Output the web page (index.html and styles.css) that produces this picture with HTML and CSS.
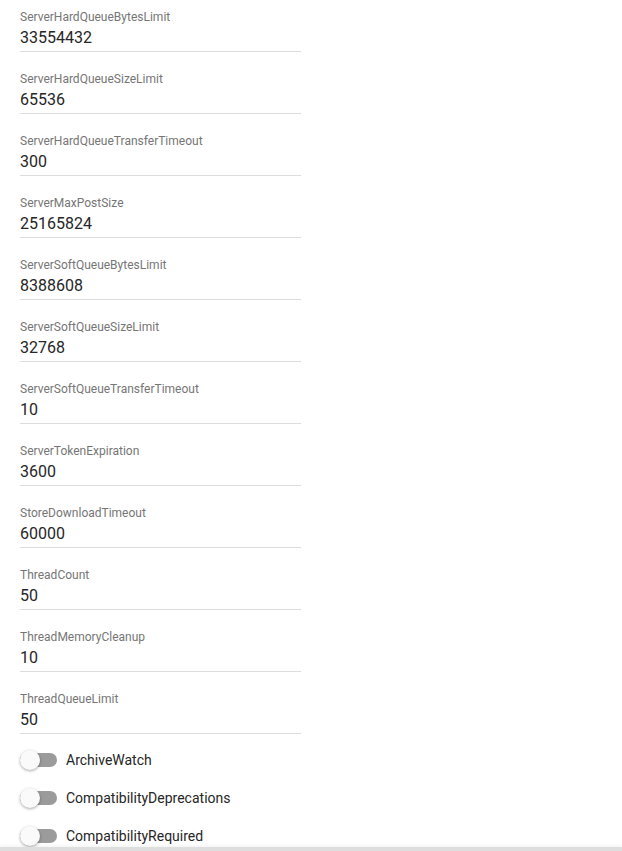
FILE: index.html
```html
<!DOCTYPE html>
<html lang="en">
<head>
  <meta charset="UTF-8" />
  <title>Server Settings</title>
  <link rel="stylesheet" href="styles.css">
</head>
<body>

  <!-- text fields -->
  <div class="fields">
    <div class="field"><div class="label">ServerHardQueueBytesLimit</div><div class="value">33554432</div></div>
    <div class="field"><div class="label">ServerHardQueueSizeLimit</div><div class="value">65536</div></div>
    <div class="field"><div class="label">ServerHardQueueTransferTimeout</div><div class="value">300</div></div>
    <div class="field"><div class="label">ServerMaxPostSize</div><div class="value">25165824</div></div>
    <div class="field"><div class="label">ServerSoftQueueBytesLimit</div><div class="value">8388608</div></div>
    <div class="field"><div class="label">ServerSoftQueueSizeLimit</div><div class="value">32768</div></div>
    <div class="field"><div class="label">ServerSoftQueueTransferTimeout</div><div class="value">10</div></div>
    <div class="field"><div class="label">ServerTokenExpiration</div><div class="value">3600</div></div>
    <div class="field"><div class="label">StoreDownloadTimeout</div><div class="value">60000</div></div>
    <div class="field"><div class="label">ThreadCount</div><div class="value">50</div></div>
    <div class="field"><div class="label">ThreadMemoryCleanup</div><div class="value">10</div></div>
    <div class="field"><div class="label">ThreadQueueLimit</div><div class="value">50</div></div>
  </div>

  <!-- toggles -->
  <div class="toggles">
    <div class="toggle"><span class="switch"><span class="thumb"></span></span><span class="toggle-label">ArchiveWatch</span></div>
    <div class="toggle"><span class="switch"><span class="thumb"></span></span><span class="toggle-label">CompatibilityDeprecations</span></div>
    <div class="toggle"><span class="switch"><span class="thumb"></span></span><span class="toggle-label">CompatibilityRequired</span></div>
  </div>

  <div class="bottom-bar"></div>
</body>
</html>
```
FILE: styles.css
```css
body {
  font-family: Roboto, 'Liberation Sans', sans-serif;
  background: #fff;
  margin: 0;
  padding: 0 20px;
  overflow: hidden;
}

/* Text fields */
.fields {
  display: flex;
  flex-direction: column;
  gap: 10px;
}

.field {
  width: 281px;
  padding: 10px 0 3px;
  border-bottom: 1px solid #dcdcdc;
}

.field .label {
  font-size: 12px;
  line-height: 14px;
  color: #767676;
}

.field .value {
  margin-top: 4px;
  font-size: 16px;
  line-height: 20px;
  color: #262626;
}

/* Toggles */
.toggles {
  margin-top: 7px;
}

.toggle {
  display: flex;
  align-items: center;
  height: 38px;
}

.switch {
  position: relative;
  width: 37px;
  height: 14px;
  border-radius: 7px;
  background-color: #9b9b9b;
  flex-shrink: 0;
}

.switch .thumb {
  position: absolute;
  left: 0;
  top: -3px;
  width: 20px;
  height: 20px;
  border-radius: 50%;
  background-color: #fafafa;
  box-shadow: 0 1px 3px rgba(0, 0, 0, 0.35);
}

.toggle-label {
  margin-left: 9px;
  font-size: 14px;
  color: #262626;
}

.bottom-bar {
  position: fixed;
  left: 0;
  right: 0;
  bottom: 0;
  height: 4px;
  background-color: #dedede;
  box-shadow: 0 -2px 3px rgba(0, 0, 0, 0.04);
}
```
